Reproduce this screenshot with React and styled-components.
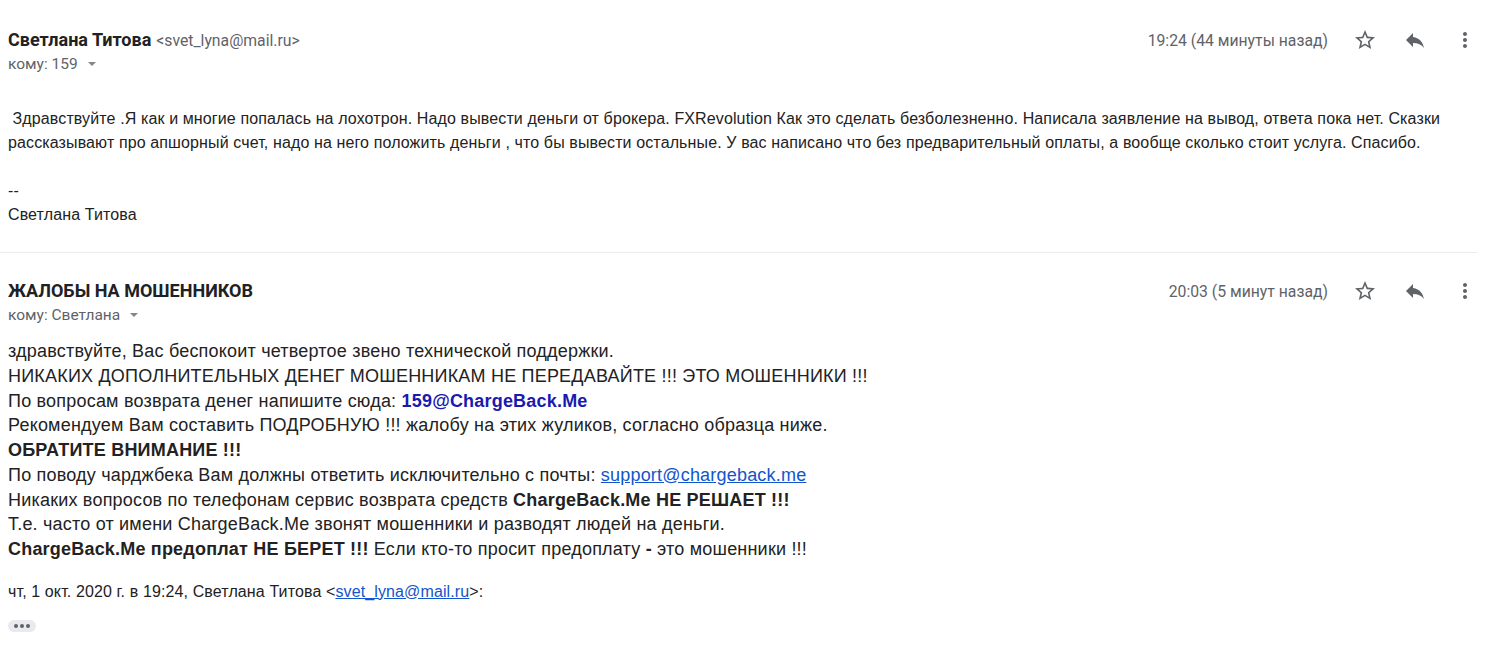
import React from "react";
import styled, { createGlobalStyle } from "styled-components";

const Global = createGlobalStyle`
  html, body { margin: 0; padding: 0; background: #fff; }
  body { font-family: Roboto, "Noto Sans", Arial, sans-serif; color: #222; }
`;

const Page = styled.div`
  padding: 0 6px 0 8px;
`;

const Message = styled.section`
  display: flex;
  flex-direction: column;
`;

const Header = styled.div`
  display: flex;
  justify-content: space-between;
  align-items: flex-start;
  padding-top: ${(p) => p.$top}px;
`;

const Who = styled.div`
  display: flex;
  flex-direction: column;
`;

const NameLine = styled.div`
  height: 24px;
  line-height: 24px;
  white-space: nowrap;
`;

const Name = styled.span`
  font-family: Roboto, Arial, sans-serif;
  font-weight: 700;
  font-size: 18px;
  color: #202124;
`;

const Addr = styled.span`
  font-family: Roboto, Arial, sans-serif;
  font-size: 15.75px;
  color: #5f6368;
  margin-left: 5px;
`;

const ToLine = styled.div`
  display: flex;
  align-items: center;
  height: 20px;
  margin-top: 2px;
  font-family: Roboto, Arial, sans-serif;
  font-size: 15.5px;
  color: #5f6368;
`;

const Caret = styled.span`
  display: inline-block;
  width: 0;
  height: 0;
  margin-left: 10px;
  border-left: 4.5px solid transparent;
  border-right: 4.5px solid transparent;
  border-top: 4.5px solid #80868b;
`;

const Side = styled.div`
  display: flex;
  align-items: center;
  height: 24px;
`;

const Time = styled.span`
  font-family: Roboto, Arial, sans-serif;
  font-size: 15.75px;
  color: #5f6368;
  margin-right: 12px;
  white-space: nowrap;
`;

const IconBtn = styled.span`
  display: flex;
  align-items: center;
  justify-content: center;
  width: 50px;
  height: 24px;
  color: #5f6368;
  svg { width: ${(p) => p.$size || 22}px; height: ${(p) => p.$size || 22}px; fill: currentColor; }
`;

const Body = styled.div`
  font-family: "Liberation Sans", Arial, sans-serif;
  font-size: ${(p) => p.$fs}px;
  line-height: ${(p) => p.$lh}px;
  color: #222;
  margin-top: ${(p) => p.$mt}px;
  letter-spacing: ${(p) => p.$ls || 0}px;
`;

const Line = styled.div`
  min-height: ${(p) => p.$lh}px;
  white-space: nowrap;
`;

const Strong = styled.b`
  font-weight: 700;
`;

const BlueMail = styled.b`
  color: #1a1ab0;
  font-weight: 700;
`;

const Link = styled.a`
  color: #15c;
  text-decoration: underline;
`;

const Divider = styled.hr`
  border: 0;
  border-top: 1px solid #ececec;
  margin: 25px 13px 0 -8px;
`;

const Ellipsis = styled.div`
  display: flex;
  align-items: center;
  justify-content: center;
  gap: 2px;
  width: 28px;
  height: 12px;
  margin-top: 16px;
  background: #e8eaed;
  border-radius: 6px;
`;

const Dot = styled.span`
  width: 4px;
  height: 4px;
  border-radius: 50%;
  background: #5f6368;
`;

const Star = () => (
  <svg viewBox="0 0 24 24"><path d="M22 9.24l-7.19-.62L12 2 9.19 8.63 2 9.24l5.46 4.73L5.82 21 12 17.27 18.18 21l-1.63-7.03L22 9.24zM12 15.4l-3.76 2.27 1-4.28-3.32-2.88 4.38-.38L12 6.1l1.71 4.04 4.38.38-3.32 2.88 1 4.28L12 15.4z" /></svg>
);
const Reply = () => (
  <svg viewBox="0 0 24 24"><path d="M10 9V5l-7 7 7 7v-4.1c5 0 8.5 1.6 11 5.1-1-5-4-10-11-11z" /></svg>
);
const More = () => (
  <svg viewBox="0 0 24 24"><path d="M12 8c1.1 0 2-.9 2-2s-.9-2-2-2-2 .9-2 2 .9 2 2 2zm0 2c-1.1 0-2 .9-2 2s.9 2 2 2 2-.9 2-2-.9-2-2-2zm0 6c-1.1 0-2 .9-2 2s.9 2 2 2 2-.9 2-2-.9-2-2-2z" /></svg>
);

const MsgHeader = ({ top, name, addr, to, time }) => (
  <Header $top={top}>
    <Who>
      <NameLine>
        <Name>{name}</Name>
        {addr && <Addr>{addr}</Addr>}
      </NameLine>
      <ToLine>
        кому: {to}
        <Caret />
      </ToLine>
    </Who>
    <Side>
      <Time>{time}</Time>
      <IconBtn $size={24}><Star /></IconBtn>
      <IconBtn $size={24}><Reply /></IconBtn>
      <IconBtn $size={24}><More /></IconBtn>
    </Side>
  </Header>
);

const L2 = 24.75;

export default function App() {
  return (
    <Page>
      <Global />
      <Message>
        <MsgHeader
          top={28}
          name="Светлана Титова"
          addr="<svet_lyna@mail.ru>"
          to="159"
          time="19:24 (44 минуты назад)"
        />
        <Body $mt={33} $lh={24} $fs={16} $ls={0.12}>
          <Line $lh={24}>
            &nbsp;Здравствуйте .Я как и многие попалась на лохотрон. Надо вывести деньги от брокера. FXRevolution Как это сделать безболезненно. Написала заявление на вывод, ответа пока нет. Сказки
          </Line>
          <Line $lh={24}>
            рассказывают про апшорный счет, надо на него положить деньги , что бы вывести остальные. У вас написано что без предварительный оплаты, а вообще сколько стоит услуга. Спасибо.
          </Line>
          <Line $lh={24} />
          <Line $lh={24}>--</Line>
          <Line $lh={24}>Светлана Титова</Line>
        </Body>
      </Message>
      <Divider />
      <Message>
        <MsgHeader
          top={26}
          name="ЖАЛОБЫ НА МОШЕННИКОВ"
          to="Светлана"
          time="20:03 (5 минут назад)"
        />
        <Body $mt={14} $lh={L2} $fs={18} $ls={0.2}>
          <Line $lh={L2}>здравствуйте, Вас беспокоит четвертое звено технической поддержки.</Line>
          <Line $lh={L2}>НИКАКИХ ДОПОЛНИТЕЛЬНЫХ ДЕНЕГ МОШЕННИКАМ НЕ ПЕРЕДАВАЙТЕ !!! ЭТО МОШЕННИКИ !!!</Line>
          <Line $lh={L2}>
            По вопросам возврата денег напишите сюда: <BlueMail>159@ChargeBack.Me</BlueMail>
          </Line>
          <Line $lh={L2}>Рекомендуем Вам составить ПОДРОБНУЮ !!! жалобу на этих жуликов, согласно образца ниже.</Line>
          <Line $lh={L2}><Strong>ОБРАТИТЕ ВНИМАНИЕ !!!</Strong></Line>
          <Line $lh={L2}>
            По поводу чарджбека Вам должны ответить исключительно с почты: <Link href="#">support@chargeback.me</Link>
          </Line>
          <Line $lh={L2}>
            Никаких вопросов по телефонам сервис возврата средств <Strong>ChargeBack.Me НЕ РЕШАЕТ !!!</Strong>
          </Line>
          <Line $lh={L2}>Т.е. часто от имени ChargeBack.Me звонят мошенники и разводят людей на деньги.</Line>
          <Line $lh={L2}>
            <Strong>ChargeBack.Me предоплат НЕ БЕРЕТ !!!</Strong> Если кто-то просит предоплату <Strong>-</Strong> это мошенники !!!
          </Line>
        </Body>
        <Body $mt={18} $lh={24} $fs={16} $ls={0.12}>
          <Line $lh={24}>
            чт, 1 окт. 2020 г. в 19:24, Светлана Титова &lt;<Link href="#">svet_lyna@mail.ru</Link>&gt;:
          </Line>
        </Body>
        <Ellipsis>
          <Dot />
          <Dot />
          <Dot />
        </Ellipsis>
      </Message>
    </Page>
  );
}
